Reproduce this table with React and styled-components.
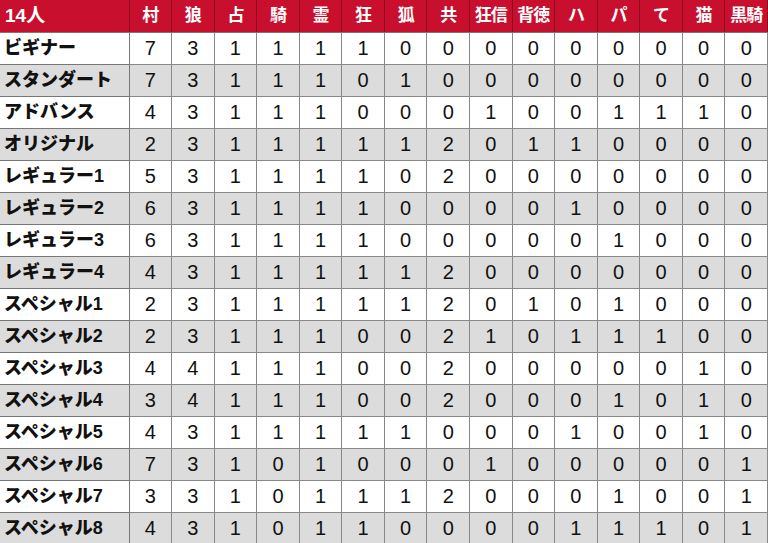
import React from 'react';
import { styled, createGlobalStyle } from 'styled-components';

const GlobalStyle = createGlobalStyle`
  html, body {
    margin: 0;
    padding: 0;
    background: #ffffff;
    overflow: hidden;
  }
`;

const headers = ['村', '狼', '占', '騎', '霊', '狂', '狐', '共', '狂信', '背徳', 'ハ', 'パ', 'て', '猫', '黒騎'];

const rows = [
  ['ビギナー', '7 3 1 1 1 1 0 0 0 0 0 0 0 0 0'],
  ['スタンダート', '7 3 1 1 1 0 1 0 0 0 0 0 0 0 0'],
  ['アドバンス', '4 3 1 1 1 0 0 0 1 0 0 1 1 1 0'],
  ['オリジナル', '2 3 1 1 1 1 1 2 0 1 1 0 0 0 0'],
  ['レギュラー1', '5 3 1 1 1 1 0 2 0 0 0 0 0 0 0'],
  ['レギュラー2', '6 3 1 1 1 1 0 0 0 0 1 0 0 0 0'],
  ['レギュラー3', '6 3 1 1 1 1 0 0 0 0 0 1 0 0 0'],
  ['レギュラー4', '4 3 1 1 1 1 1 2 0 0 0 0 0 0 0'],
  ['スペシャル1', '2 3 1 1 1 1 1 2 0 1 0 1 0 0 0'],
  ['スペシャル2', '2 3 1 1 1 0 0 2 1 0 1 1 1 0 0'],
  ['スペシャル3', '4 4 1 1 1 0 0 2 0 0 0 0 0 1 0'],
  ['スペシャル4', '3 4 1 1 1 0 0 2 0 0 0 1 0 1 0'],
  ['スペシャル5', '4 3 1 1 1 1 1 0 0 0 1 0 0 1 0'],
  ['スペシャル6', '7 3 1 0 1 0 0 0 1 0 0 0 0 0 1'],
  ['スペシャル7', '3 3 1 0 1 1 1 2 0 0 0 1 0 0 1'],
  ['スペシャル8', '4 3 1 0 1 1 0 0 0 0 1 1 1 0 1'],
];

const App = () => {
  return (
    <>
      <GlobalStyle />
      <Table>
        <colgroup>
          <col style={{ width: '129px' }} />
          {headers.map(h => (
            <col key={h} />
          ))}
        </colgroup>
        <thead>
          <HeadRow>
            <HeadLabel>14人</HeadLabel>
            {headers.map(h => (
              <HeadCell key={h}>{h}</HeadCell>
            ))}
          </HeadRow>
        </thead>
        <tbody>
          {rows.map(([name, values], i) => (
            <BodyRow key={name} $shaded={i % 2 === 1}>
              <Label>{name}</Label>
              {values.split(' ').map((v, j) => (
                <Cell key={j}>{v}</Cell>
              ))}
            </BodyRow>
          ))}
        </tbody>
      </Table>
    </>
  );
};

export default App;

const Table = styled.table`
  width: 768px;
  table-layout: fixed;
  border-collapse: collapse;
  font-family: 'Liberation Sans', 'Noto Sans CJK JP', sans-serif;
`;
const HeadRow = styled.tr`
  height: 32px;
  background-color: #c8102e;
`;
const HeadLabel = styled.th`
  padding: 0 0 0 5px;
  text-align: left;
  font-size: 19px;
  line-height: 1;
  font-weight: 700;
  color: #ffffff;
  border-right: 1px solid #8e0a1f;
  border-bottom: 1px solid #777777;
`;
const HeadCell = styled.th`
  padding: 0;
  text-align: center;
  font-size: 17px;
  line-height: 1;
  font-weight: 700;
  letter-spacing: -1px;
  white-space: nowrap;
  color: #ffffff;
  border-left: 1px solid #8e0a1f;
  border-right: 1px solid #8e0a1f;
  border-bottom: 1px solid #777777;
`;
const BodyRow = styled.tr`
  height: 32px;
  background-color: ${p => (p.$shaded ? '#dcdcdc' : '#ffffff')};
`;
const Label = styled.td`
  padding: 0 0 0 4px;
  font-size: 18px;
  line-height: 1;
  font-weight: 900;
  color: #111111;
  white-space: nowrap;
  border: 1px solid #777777;
  border-left: none;
`;
const Cell = styled.td`
  padding: 0;
  text-align: center;
  font-size: 20px;
  line-height: 1;
  color: #111111;
  border: 1px solid #888888;
`;
